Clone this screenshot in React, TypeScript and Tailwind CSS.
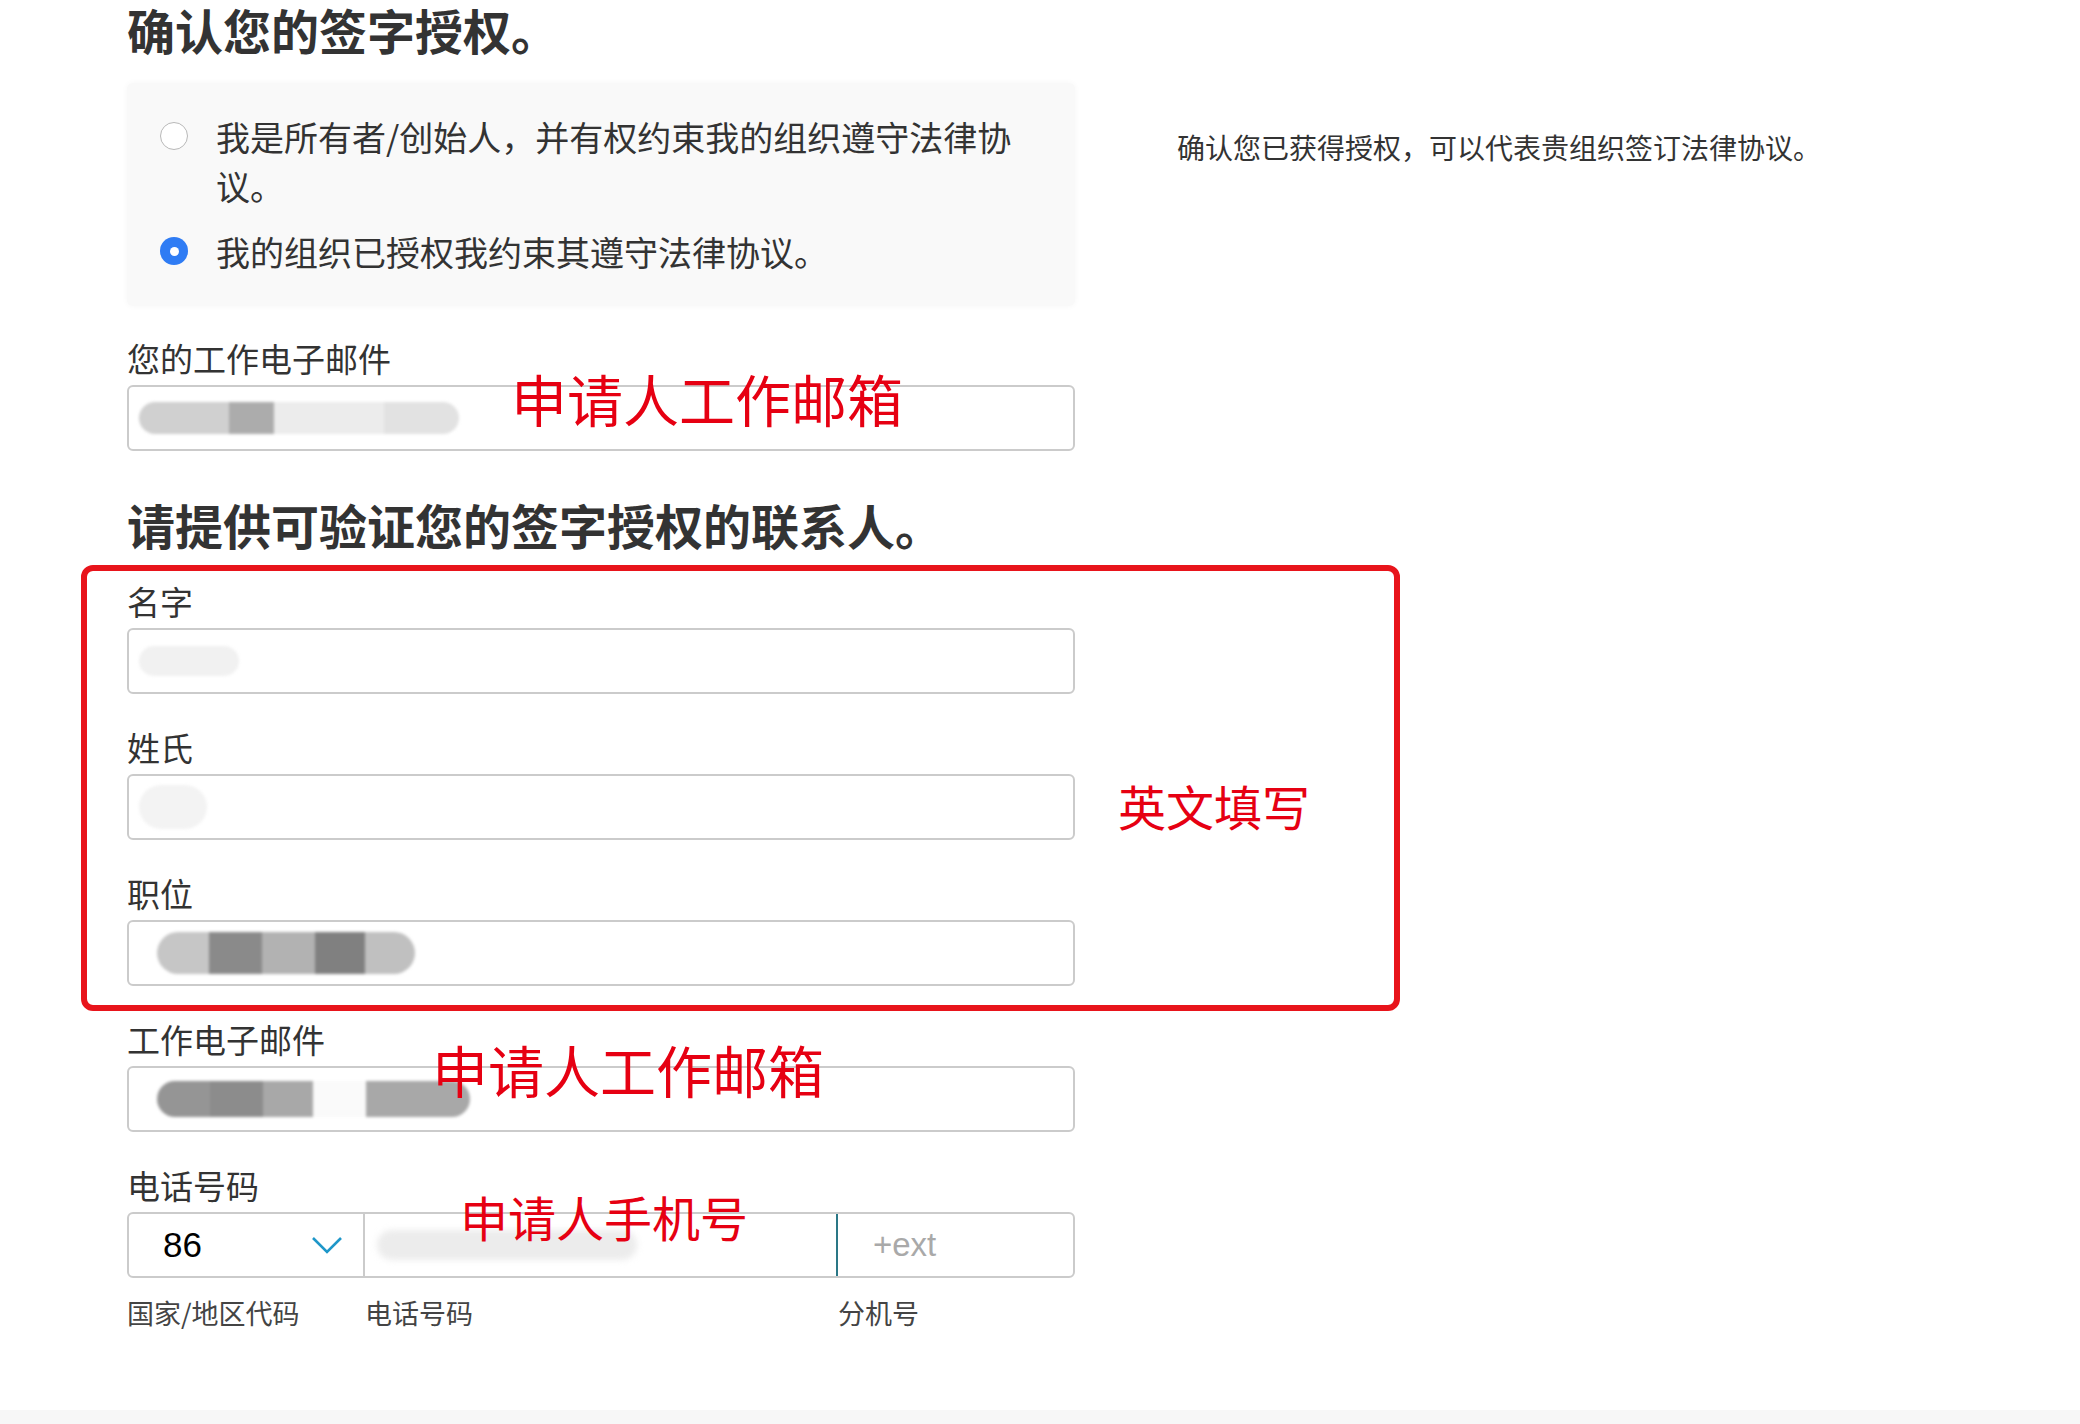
import React from 'react'

const cjk = "font-['Noto_Sans_CJK_SC','Noto_Sans',sans-serif]"

function Redact({ parts, className }: { parts: { w: number; c: string }[]; className?: string }) {
  return (
    <div className={`flex items-stretch blur-[1.5px] ${className ?? ''}`}>
      {parts.map((p, i) => (
        <div key={i} className={`${p.c} first:rounded-l-full last:rounded-r-full`} style={{ width: p.w }} />
      ))}
    </div>
  )
}

function Field({
  label,
  children,
}: {
  label: string
  children?: React.ReactNode
}) {
  return (
    <div className="relative">
      <div className="h-[40px] leading-[40px] text-[33px] text-[#333]">{label}</div>
      <div className="mt-[7px] flex h-[66px] w-[948px] items-center rounded-[6px] border-2 border-[#cbcbcb] bg-white px-[8px]">
        {children}
      </div>
    </div>
  )
}

function Note({ text, className }: { text: string; className: string }) {
  return (
    <span className={`absolute whitespace-nowrap leading-none text-[#e60012] ${className}`}>{text}</span>
  )
}

export default function App() {
  return (
    <div className={`flex h-[1424px] w-full flex-col bg-white ${cjk}`}>
      <div className="h-[1410px] pl-[127px]">
        <h1 className="text-[48px] font-bold leading-[58px] text-[#333]">确认您的签字授权。</h1>

        <div className="mt-[25px] flex items-start">
          <div className="flex h-[223px] w-[948px] flex-col gap-[17px] rounded-[6px] bg-[#f9f9f9] pl-[33px] pt-[29px] shadow-[0_0_6px_rgba(0,0,0,0.04)]">
            <label className="flex items-start gap-[28px]">
              <span className="mt-[10px] h-[28px] w-[28px] shrink-0 rounded-full border-[1.5px] border-[#b8b8b8] bg-white" />
              <span className="w-[810px] text-[34px] leading-[49px] text-[#333]">
                我是所有者/创始人，并有权约束我的组织遵守法律协议。
              </span>
            </label>
            <label className="flex items-start gap-[28px]">
              <span className="mt-[10px] flex h-[28px] w-[28px] shrink-0 items-center justify-center rounded-full bg-[#2f7cf4]">
                <span className="h-[9px] w-[9px] rounded-full bg-white" />
              </span>
              <span className="text-[34px] leading-[49px] text-[#333]">我的组织已授权我约束其遵守法律协议。</span>
            </label>
          </div>
          <p className="ml-[102px] mt-[44px] text-[28px] leading-[40px] text-[#333]">
            确认您已获得授权，可以代表贵组织签订法律协议。
          </p>
        </div>

        <div className="relative mt-[32px]">
          <Field label="您的工作电子邮件">
            <Redact
              className="ml-[2px] h-[32px]"
              parts={[
                { w: 90, c: 'bg-[#d0d0d0]' },
                { w: 45, c: 'bg-[#acacac]' },
                { w: 110, c: 'bg-[#ececec]' },
                { w: 75, c: 'bg-[#e2e2e2]' },
              ]}
            />
          </Field>
          <Note text="申请人工作邮箱" className="left-[384px] top-[32px] text-[56px]" />
        </div>

        <h2 className="mt-[44px] text-[48px] font-bold leading-[58px] text-[#333]">
          请提供可验证您的签字授权的联系人。
        </h2>

        <div className="relative mt-[28px] flex flex-col gap-[33px]">
          <div className="pointer-events-none absolute left-[-46px] top-[-16px] h-[446px] w-[1319px] rounded-[12px] border-[6px] border-[#e8141b]" />
          <Field label="名字">
            <Redact className="ml-[2px] h-[30px]" parts={[{ w: 100, c: 'bg-[#f1f1f1]' }]} />
          </Field>
          <Field label="姓氏">
            <Redact className="ml-[2px] h-[44px]" parts={[{ w: 68, c: 'bg-[#f3f3f3]' }]} />
          </Field>
          <Field label="职位">
            <Redact
              className="ml-[20px] h-[42px]"
              parts={[
                { w: 52, c: 'bg-[#c6c6c6]' },
                { w: 53, c: 'bg-[#8a8a8a]' },
                { w: 53, c: 'bg-[#b2b2b2]' },
                { w: 50, c: 'bg-[#808080]' },
                { w: 50, c: 'bg-[#c0c0c0]' },
              ]}
            />
          </Field>
          <Note text="英文填写" className="left-[991px] top-[200px] text-[48px]" />
        </div>

        <div className="relative mt-[33px]">
          <Field label="工作电子邮件">
            <Redact
              className="ml-[20px] h-[36px]"
              parts={[
                { w: 53, c: 'bg-[#959595]' },
                { w: 53, c: 'bg-[#8c8c8c]' },
                { w: 50, c: 'bg-[#a8a8a8]' },
                { w: 53, c: 'bg-[#fafafa]' },
                { w: 104, c: 'bg-[#a8a8a8]' },
              ]}
            />
          </Field>
          <Note text="申请人工作邮箱" className="left-[305px] top-[22px] text-[56px]" />
        </div>

        <div className="relative mt-[33px]">
          <div className="h-[40px] text-[33px] leading-[40px] text-[#333]">电话号码</div>
          <div className="mt-[7px] flex h-[66px] w-[948px] overflow-hidden rounded-[6px] border-2 border-[#cbcbcb] bg-white">
            <div className="flex w-[236px] items-center justify-between border-r-2 border-[#cbcbcb] pl-[34px] pr-[20px]">
              <span className="font-['Liberation_Sans',Arial,sans-serif] text-[35px] text-black">86</span>
              <svg width="32" height="20" viewBox="0 0 32 20" fill="none">
                <polyline points="2,3 16,17 30,3" stroke="#1f97c9" strokeWidth="2.6" />
              </svg>
            </div>
            <div className="flex w-[473px] items-center border-r-2 border-[#2a7786] pl-[12px]">
              <div className="h-[30px] w-[260px] rounded-full bg-[#ececec] blur-[3px]" />
            </div>
            <div className="flex flex-1 items-center pl-[35px] font-['Liberation_Sans',Arial,sans-serif] text-[33px] text-[#a9a9a9]">
              +ext
            </div>
          </div>
          <div className="mt-[17px] flex h-[36px] text-[27px] leading-[36px] text-[#444]">
            <span className="w-[238px]">国家/地区代码</span>
            <span className="w-[473px]">电话号码</span>
            <span>分机号</span>
          </div>
          <Note text="申请人手机号" className="left-[333px] top-[27px] text-[48px]" />
        </div>
      </div>
      <div className="flex-1 bg-[#f7f7f7]" />
    </div>
  )
}
